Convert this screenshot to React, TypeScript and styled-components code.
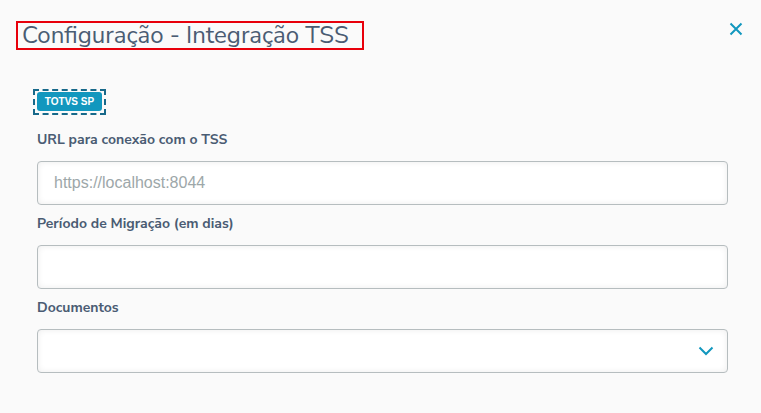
import React from "react";
import styled, { createGlobalStyle } from "styled-components";

const GlobalStyle = createGlobalStyle`
  html, body {
    margin: 0;
    padding: 0;
    background: #fafafa;
  }
  body {
    font-family: "Nunito Sans", Lato, "Open Sans", sans-serif;
    color: #4a5c73;
  }
`;

const Page = styled.div`
  width: 761px;
  height: 413px;
  background: #fafafa;
  box-sizing: border-box;
  overflow: hidden;
`;

const Header = styled.header`
  display: flex;
  align-items: flex-start;
  justify-content: space-between;
  padding: 21px 17px 0 16px;
`;

const Title = styled.h1`
  margin: 0;
  display: inline-block;
  border: 2px solid #e8000b;
  padding: 0 13px 0 4px;
  font-size: 24px;
  line-height: 25px;
  font-weight: 400;
  color: #4a5c73;
`;

const CloseButton = styled.button`
  border: none;
  background: none;
  padding: 0;
  width: 16px;
  height: 16px;
  display: flex;
  align-items: center;
  justify-content: center;
  cursor: pointer;
`;

const Body = styled.div`
  padding: 39px 33px 0 33px;
`;

const TagRow = styled.div`
  display: flex;
  margin-bottom: 14px;
`;

const FocusRing = styled.span`
  display: inline-flex;
  padding: 1px 2px 2px;
  border: 2px dashed #17698a;
`;

const Tag = styled.span`
  display: inline-flex;
  align-items: center;
  justify-content: center;
  width: 65px;
  height: 19px;
  border-radius: 3px;
  background: #1297be;
  color: #fff;
  font-family: "Liberation Sans", Arial, sans-serif;
  font-size: 10px;
  font-weight: 700;
`;

const Field = styled.div`
  display: flex;
  flex-direction: column;
  margin: 0 0 8px 4px;
`;

const Label = styled.label`
  font-size: 14px;
  line-height: 22px;
  font-weight: 700;
  color: #4a5c73;
  margin-bottom: 10px;
`;

const InputBox = styled.div`
  height: 44px;
  box-sizing: border-box;
  border: 1px solid #b6bdbf;
  border-radius: 4px;
  background: #fff;
  box-shadow: inset 0 0 6px rgba(0, 0, 0, 0.08);
  display: flex;
  align-items: center;
`;

const Input = styled.input`
  flex: 1;
  height: 100%;
  border: none;
  background: transparent;
  padding: 0 16px;
  font-family: "Liberation Sans", Arial, sans-serif;
  font-size: 16px;
  color: #4a5c73;
  outline: none;
  &::placeholder {
    color: #9da7a9;
  }
`;

const Chevron = styled.span`
  display: flex;
  margin-right: 13px;
`;

const fields = [
  { label: "URL para conexão com o TSS", placeholder: "https://localhost:8044" },
  { label: "Período de Migração (em dias)", placeholder: "" },
];

export default function App() {
  return (
    <Page>
      <GlobalStyle />
      <Header>
        <Title>Configuração - Integração TSS</Title>
        <CloseButton aria-label="Fechar">
          <svg width="14" height="14" viewBox="0 0 14 14">
            <path d="M1.5 1.5 L12.5 12.5 M12.5 1.5 L1.5 12.5" stroke="#1297be" strokeWidth="2" fill="none" />
          </svg>
        </CloseButton>
      </Header>
      <Body>
        <TagRow>
          <FocusRing>
            <Tag>TOTVS SP</Tag>
          </FocusRing>
        </TagRow>
        {fields.map((f) => (
          <Field key={f.label}>
            <Label>{f.label}</Label>
            <InputBox>
              <Input placeholder={f.placeholder} />
            </InputBox>
          </Field>
        ))}
        <Field>
          <Label>Documentos</Label>
          <InputBox>
            <Input readOnly />
            <Chevron>
              <svg width="16" height="10" viewBox="0 0 16 10">
                <path d="M1.5 1.5 L8 8 L14.5 1.5" stroke="#1297be" strokeWidth="2" fill="none" />
              </svg>
            </Chevron>
          </InputBox>
        </Field>
      </Body>
    </Page>
  );
}
